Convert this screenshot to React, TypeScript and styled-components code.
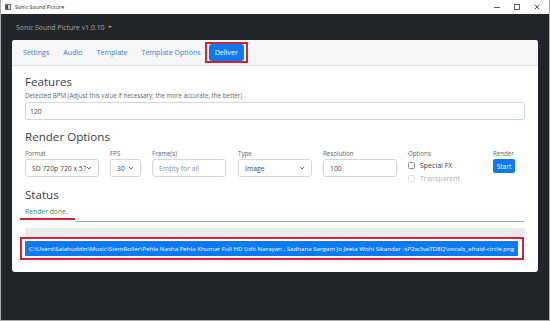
import React from 'react';
import styled, { createGlobalStyle } from 'styled-components';

const GlobalStyle = createGlobalStyle`
  html, body {
    margin: 0;
    padding: 0;
    background: #ffffff;
  }
  * {
    box-sizing: border-box;
  }
`;

const FONT = `"Open Sans", "Noto Sans", sans-serif`;

const Window = styled.div`
  width: 550px;
  height: 321px;
  display: flex;
  flex-direction: column;
  border: 1px solid #a9a9a9;
  border-top: none;
  font-family: ${FONT};
  overflow: hidden;
`;

const TitleBar = styled.div`
  height: 14px;
  flex: none;
  display: flex;
  align-items: center;
  background: #ffffff;
  padding-left: 4px;
`;

const AppIcon = styled.div`
  width: 6px;
  height: 6px;
  border: 1px solid #6b6b6b;
  background: linear-gradient(90deg, #4a4a4a 0 40%, #d8d8d8 40% 100%);
  margin-right: 4px;
`;

const TitleText = styled.span`
  font-size: 5.3px;
  color: #222;
  flex: 1;
`;

const WindowControls = styled.div`
  display: flex;
  align-items: center;
  gap: 12px;
  padding-right: 8px;
  color: #333;
`;

const Main = styled.div`
  flex: 1;
  display: flex;
  flex-direction: column;
  background: #222529;
  padding: 0 11px 0 11px;
`;

const Navbar = styled.div`
  height: 26px;
  display: flex;
  align-items: center;
  padding-left: 4px;
  gap: 3px;
`;

const Brand = styled.span`
  font-size: 6.9px;
  color: #a3a5a8;
`;

const Caret = styled.span`
  width: 0;
  height: 0;
  border-left: 2px solid transparent;
  border-right: 2px solid transparent;
  border-top: 2px solid #a3a5a8;
`;

const Card = styled.div`
  height: 232px;
  background: #ffffff;
  border-radius: 3px;
  overflow: hidden;
  display: flex;
  flex-direction: column;
`;

const CardHeader = styled.div`
  height: 26px;
  flex: none;
  background: #f7f7f7;
  border-bottom: 1px solid #e2e2e2;
  display: flex;
  align-items: center;
  padding-left: 4px;
`;

const TabLink = styled.span`
  font-size: 7.1px;
  color: #2f80d2;
  padding: 0 7px;
  line-height: 17px;
`;

const ActiveOutline = styled.span`
  display: inline-flex;
  border: 2px solid #d7212c;
  padding: 0 2px;
  margin-left: -3px;
`;

const ActiveTab = styled.span`
  font-size: 7.1px;
  color: #ffffff;
  background: #0b7bf5;
  border-radius: 3px;
  padding: 0 6px;
  line-height: 17px;
`;

const CardBody = styled.div`
  flex: 1;
  padding: 9px 13px 0 13px;
  display: flex;
  flex-direction: column;
`;

const Heading = styled.div<{ $gap?: number }>`
  font-size: 11.6px;
  line-height: 14px;
  color: #3a3d40;
  margin-top: ${p => p.$gap ?? 0}px;
`;

const FieldLabel = styled.div`
  font-size: 6.2px;
  line-height: 9px;
  color: #606468;
  white-space: nowrap;
`;

const Control = styled.div<{ $pad?: number; $muted?: boolean }>`
  height: 18px;
  border: 1px solid #d3d7db;
  border-radius: 3px;
  display: flex;
  align-items: center;
  padding: 0 ${p => p.$pad ?? 6}px;
  font-size: 6.8px;
  color: ${p => (p.$muted ? '#8a8f94' : '#45494d')};
  white-space: nowrap;
  overflow: hidden;
  background: #fff;
`;

const SelectText = styled.span`
  flex: 1;
  overflow: hidden;
  white-space: nowrap;
`;

const BpmBlock = styled.div`
  margin-top: 2px;
  display: flex;
  flex-direction: column;
  gap: 2px;
`;

const OptionsRow = styled.div`
  display: flex;
  margin-top: 5px;
`;

const Field = styled.div<{ $w: number; $gap: number }>`
  width: ${p => p.$w}px;
  margin-right: ${p => p.$gap}px;
  display: flex;
  flex-direction: column;
  gap: 1px;
  flex: none;
`;

const CheckRow = styled.label<{ $disabled?: boolean }>`
  display: flex;
  align-items: center;
  gap: 5px;
  height: 12px;
  font-size: 7px;
  color: ${p => (p.$disabled ? '#b3b6b9' : '#3a3d40')};
`;

const CheckBox = styled.span<{ $disabled?: boolean }>`
  width: 7px;
  height: 7px;
  border: 1px solid ${p => (p.$disabled ? '#dcdcdc' : '#8f8f8f')};
  border-radius: 1.5px;
  background: #fff;
`;

const StartButton = styled.span`
  width: 22px;
  height: 14px;
  display: flex;
  align-items: center;
  justify-content: center;
  background: #0b7bf5;
  color: #fff;
  font-size: 6.6px;
  border-radius: 2px;
`;

const StatusText = styled.div`
  position: relative;
  margin-top: 5px;
  font-size: 6.8px;
  line-height: 9px;
  color: #3f8a55;
  &::after {
    content: '';
    position: absolute;
    left: -5px;
    top: 11px;
    width: 55px;
    height: 2px;
    background: #d7212c;
  }
`;

const Divider = styled.div`
  margin-top: 5px;
  margin-left: 50px;
  margin-right: 1px;
  height: 1px;
  background: #8eaac2;
`;

const ProgressTrack = styled.div`
  margin-top: 6px;
  height: 9px;
  background: #e8eaec;
  border-radius: 2px;
`;

const PathOutline = styled.div`
  margin: 0 1px 0 -5px;
  border: 2px solid #d7212c;
  padding: 2px 3px;
`;

const PathBar = styled.div`
  height: 15px;
  background: #0b7bf5;
  color: #fff;
  font-size: 6.17px;
  display: flex;
  align-items: center;
  padding-left: 4px;
  white-space: nowrap;
  overflow: hidden;
  margin-right: 1px;
`;

const Chevron = () => (
  <svg width="6" height="4" viewBox="0 0 6 4">
    <path d="M0.8 0.8 L3 3 L5.2 0.8" fill="none" stroke="#55595d" strokeWidth="0.9" />
  </svg>
);

const tabs = ['Settings', 'Audio', 'Template', 'Template Options'];

const PATH =
  'C:\\Users\\Salahuddin\\Music\\StemRoller\\Pehla Nasha Pehla Khumar Full HD Udit Narayan , Sadhana Sargam Jo Jeeta Wohi Sikandar -sP2w3vaTD8Q\\vocals_afraid-circle.png';

const App: React.FC = () => {
  return (
    <>
      <GlobalStyle />
      <Window>
        <TitleBar>
          <AppIcon />
          <TitleText>Sonic Sound Picture</TitleText>
          <WindowControls>
            <svg width="8" height="8" viewBox="0 0 8 8">
              <path d="M1 4.5 H7" stroke="#333" strokeWidth="0.8" />
            </svg>
            <svg width="8" height="8" viewBox="0 0 8 8">
              <rect x="1.5" y="1.5" width="5" height="5" fill="none" stroke="#333" strokeWidth="0.8" />
            </svg>
            <svg width="8" height="8" viewBox="0 0 8 8">
              <path d="M1.5 1.5 L6.5 6.5 M6.5 1.5 L1.5 6.5" stroke="#333" strokeWidth="0.8" />
            </svg>
          </WindowControls>
        </TitleBar>
        <Main>
          <Navbar>
            <Brand>Sonic Sound Picture v1.0.10</Brand>
            <Caret />
          </Navbar>
          <Card>
            <CardHeader>
              {tabs.map(t => (
                <TabLink key={t}>{t}</TabLink>
              ))}
              <ActiveOutline>
                <ActiveTab>Deliver</ActiveTab>
              </ActiveOutline>
            </CardHeader>
            <CardBody>
              <Heading>Features</Heading>
              <BpmBlock>
                <FieldLabel>
                  Detected BPM (Adjust this value if necessary; the more accurate, the better)
                </FieldLabel>
                <Control $pad={4}>120</Control>
              </BpmBlock>

              <Heading $gap={10}>Render Options</Heading>
              <OptionsRow>
                <Field $w={74} $gap={11}>
                  <FieldLabel>Format</FieldLabel>
                  <Control>
                    <SelectText>SD 720p 720 x 576</SelectText>
                    <Chevron />
                  </Control>
                </Field>
                <Field $w={31} $gap={11}>
                  <FieldLabel>FPS</FieldLabel>
                  <Control>
                    <SelectText>30</SelectText>
                    <Chevron />
                  </Control>
                </Field>
                <Field $w={74} $gap={12}>
                  <FieldLabel>Frame(s)</FieldLabel>
                  <Control $muted>Empty for all</Control>
                </Field>
                <Field $w={74} $gap={11}>
                  <FieldLabel>Type</FieldLabel>
                  <Control>
                    <SelectText>Image</SelectText>
                    <Chevron />
                  </Control>
                </Field>
                <Field $w={74} $gap={11}>
                  <FieldLabel>Resolution</FieldLabel>
                  <Control>100</Control>
                </Field>
                <Field $w={74} $gap={11}>
                  <FieldLabel>Options</FieldLabel>
                  <CheckRow>
                    <CheckBox />
                    Special FX
                  </CheckRow>
                  <CheckRow $disabled>
                    <CheckBox $disabled />
                    Transparent
                  </CheckRow>
                </Field>
                <Field $w={24} $gap={0}>
                  <FieldLabel>Render</FieldLabel>
                  <StartButton>Start</StartButton>
                </Field>
              </OptionsRow>

              <Heading $gap={4}>Status</Heading>
              <StatusText>Render done.</StatusText>
              <Divider />
              <ProgressTrack />
              <PathOutline>
                <PathBar>{PATH}</PathBar>
              </PathOutline>
            </CardBody>
          </Card>
        </Main>
      </Window>
    </>
  );
};

export default App;
